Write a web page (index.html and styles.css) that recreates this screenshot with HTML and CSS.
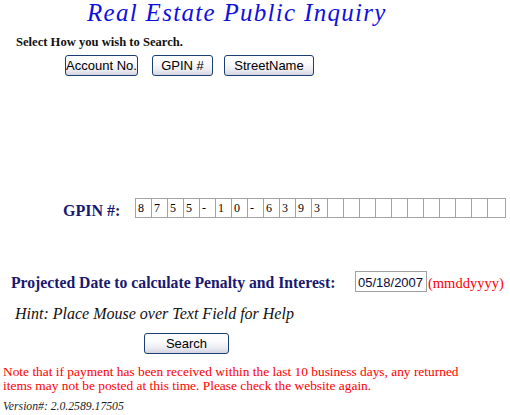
FILE: index.html
```html
<!DOCTYPE html>
<html>
<head>
<meta charset="utf-8">
<title>Real Estate Public Inquiry</title>
<link rel="stylesheet" href="styles.css">
</head>
<body>
<div class="page">
  <h1 class="title">Real Estate Public Inquiry</h1>
  <div class="select">Select How you wish to Search.</div>
  <div class="modes">
    <button class="btn btn-acct">Account No.</button>
    <button class="btn btn-gpin">GPIN #</button>
    <button class="btn btn-street">StreetName</button>
  </div>

  <div class="gpin-row">
    <span class="gpin-label">GPIN #:</span>
    <div class="cells">
      <span class="cell">8</span><span class="cell">7</span><span class="cell">5</span><span class="cell">5</span><span class="cell">-</span><span class="cell">1</span><span class="cell">0</span><span class="cell">-</span><span class="cell">6</span><span class="cell">3</span><span class="cell">9</span><span class="cell">3</span><span class="cell"></span><span class="cell"></span><span class="cell"></span><span class="cell"></span><span class="cell"></span><span class="cell"></span><span class="cell"></span><span class="cell"></span><span class="cell"></span><span class="cell"></span><span class="cell cell-last"></span>
    </div>
  </div>

  <div class="date-row">
    <span class="date-label">Projected Date to calculate Penalty and Interest:</span>
    <span class="date-input">05/18/2007</span>
    <span class="date-fmt">(mmddyyyy)</span>
  </div>

  <div class="hint">Hint: Place Mouse over Text Field for Help</div>

  <div class="search-row">
    <button class="btn btn-search">Search</button>
  </div>

  <p class="note">Note that if payment has been received within the last 10 business days, any returned items may not be posted at this time. Please check the website again.</p>

  <div class="version">Version#: 2.0.2589.17505</div>
</div>
</body>
</html>
```

FILE: styles.css
```css
html, body {
  margin: 0;
  padding: 0;
  background: #ffffff;
}

.page {
  width: 510px;
  height: 415px;
  font-family: "Liberation Serif", "Times New Roman", serif;
  color: #000;
  display: flex;
  flex-direction: column;
  align-items: flex-start;
}

.title {
  margin: 0;
  padding: 0 0 0 87px;
  font-size: 25px;
  font-weight: normal;
  font-style: italic;
  letter-spacing: 1.3px;
  line-height: 26px;
  color: #1010dd;
  white-space: nowrap;
}

.select {
  margin: 9px 0 0 16px;
  font-size: 12.6px;
  font-weight: bold;
  line-height: 14px;
  color: #111;
}

.modes {
  display: flex;
  margin: 6px 0 0 65px;
}

.btn {
  font-family: "Liberation Sans", Arial, sans-serif;
  font-size: 13px;
  color: #000;
  height: 21px;
  padding: 0;
  border: 1px solid #1c3f73;
  border-radius: 3px;
  background: linear-gradient(#ffffff 0%, #fbfbfd 40%, #ececf2 72%, #d4d4e2 100%);
  line-height: 18px;
  box-sizing: border-box;
}

.btn-acct { width: 73px; }
.btn-gpin { width: 61px; margin-left: 14px; }
.btn-street { width: 90px; margin-left: 11px; }

.gpin-row {
  display: flex;
  align-items: flex-start;
  margin: 122px 0 0 63px;
}

.gpin-label {
  font-size: 16px;
  font-weight: bold;
  line-height: 18px;
  padding-top: 4px;
  color: #191970;
  width: 72px;
}

.cells {
  display: flex;
  border-top: 1px solid #a4a4a4;
  border-bottom: 1px solid #a4a4a4;
  border-left: 1px solid #a4a4a4;
}

.cell {
  width: 16px;
  height: 18px;
  border-right: 1px solid #a4a4a4;
  font-size: 12px;
  line-height: 18px;
  padding-left: 2px;
  box-sizing: border-box;
}

.cell-last { width: 18px; }

.date-row {
  display: flex;
  align-items: flex-start;
  margin: 51px 0 0 11px;
}

.date-label {
  font-size: 15.7px;
  font-weight: bold;
  line-height: 18px;
  margin-top: 3px;
  color: #191970;
  width: 344px;
  white-space: nowrap;
}

.date-input {
  width: 72px;
  height: 21px;
  box-sizing: border-box;
  border: 1px solid #a0a0a0;
  font-family: "Liberation Sans", Arial, sans-serif;
  font-size: 13px;
  line-height: 17px;
  padding: 2px 0 0 2px;
  color: #0a0a3a;
  white-space: nowrap;
}

.date-fmt {
  font-size: 14.5px;
  line-height: 17px;
  margin: 3.5px 0 0 1px;
  color: #ff0000;
  white-space: nowrap;
}

.hint {
  margin: 13px 0 0 15px;
  font-size: 16px;
  font-style: italic;
  line-height: 18px;
  color: #111;
}

.search-row {
  margin: 10px 0 0 144px;
}

.btn-search { width: 85px; }

.note {
  margin: 11px 0 0 3px;
  font-size: 13.4px;
  line-height: 14px;
  color: #ff0000;
  width: 470px;
}

.version {
  margin: 7px 0 0 3px;
  font-size: 11.7px;
  line-height: 13px;
  font-style: italic;
  color: #222;
}
```
